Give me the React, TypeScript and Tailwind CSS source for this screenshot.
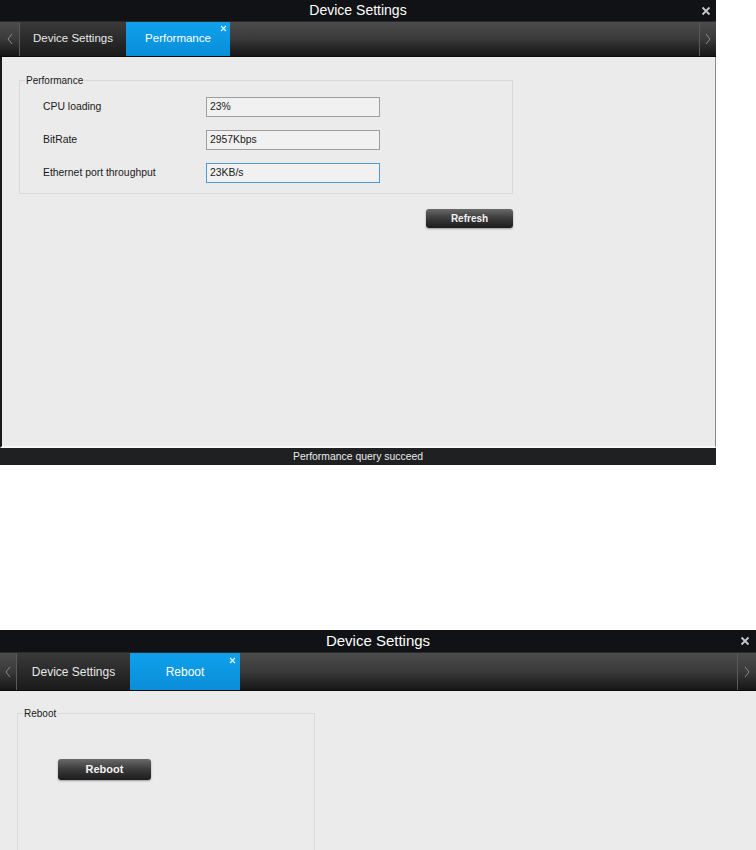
import type { ReactNode } from 'react'

const font = { fontFamily: '"Liberation Sans", Arial, sans-serif' }

function CloseIcon({ className }: { className?: string }) {
  return (
    <svg viewBox="0 0 10 10" className={className} fill="none" stroke="currentColor" strokeWidth="1.8">
      <path d="M1.5 1.5 8.5 8.5M8.5 1.5 1.5 8.5" />
    </svg>
  )
}

function Chevron({ dir }: { dir: 'left' | 'right' }) {
  return (
    <svg viewBox="0 0 6 12" className="w-[6px] h-[12px] text-[#8a8a8a]" fill="none" stroke="currentColor" strokeWidth="1">
      {dir === 'left' ? <path d="M5 1 1 6l4 5" /> : <path d="M1 1l4 5-4 5" />}
    </svg>
  )
}

function DarkButton({ children, className }: { children: ReactNode; className: string }) {
  return (
    <button
      className={`rounded-[3px] bg-gradient-to-b from-[#6a6a6a] via-[#3a3a3a] to-[#1c1c1c] font-bold text-[#f2f2f2] shadow-[0_1px_2px_rgba(0,0,0,0.35)] ${className}`}
    >
      {children}
    </button>
  )
}

function Field({ label, value, focused }: { label: string; value: string; focused?: boolean }) {
  return (
    <div className="flex items-center h-[20px]">
      <span className="w-[163px] text-[10.4px] text-[#1a1a1a]">{label}</span>
      <div
        className={`w-[174px] h-[20px] flex items-center px-[3px] text-[10.4px] text-[#1a1a1a] bg-[#f1f1f1] border ${
          focused ? 'border-[#4d9ad6]' : 'border-[#9e9e9e]'
        }`}
      >
        {value}
      </div>
    </div>
  )
}

function TitleBar({ h, size, closeRight }: { h: string; size: string; closeRight: string }) {
  return (
    <div className={`${h} bg-[#111215] relative flex items-center justify-center`}>
      <span className={`${size} text-white`}>Device Settings</span>
      <CloseIcon className={`absolute ${closeRight} top-1/2 -translate-y-1/2 w-[10px] h-[10px] text-[#c8c8c8]`} />
    </div>
  )
}

function PerformanceWindow() {
  return (
    <div className="w-[716px]">
      <TitleBar h="h-[21px]" size="text-[14px]" closeRight="right-[5px]" />

      {/* Tabs */}
      <div className="h-[36px] flex border-t border-[#2b2b2b] border-b border-b-[#0a0a0a] bg-gradient-to-b from-[#4c4c4c] via-[#3a3a3a] to-[#161616]">
        <div className="w-[20px] flex items-center justify-center border-r border-[#5a5a5a]">
          <Chevron dir="left" />
        </div>
        <div className="w-[106px] flex items-center justify-center text-[11.5px] text-[#e8e8e8] bg-gradient-to-b from-[#3a3a3a] to-[#1b1b1b]">
          Device Settings
        </div>
        <div className="w-[104px] relative flex items-center justify-center text-[11.5px] text-white bg-gradient-to-b from-[#0fa0ec] to-[#0a8ed9]">
          Performance
          <CloseIcon className="absolute right-[3px] top-[3px] w-[7px] h-[7px] text-[#dff2ff]" />
        </div>
        <div className="flex-1" />
        <div className="w-[17px] flex items-center justify-center border-l border-[#5a5a5a]">
          <Chevron dir="right" />
        </div>
      </div>

      {/* Content */}
      <div className="h-[391px] bg-[#ebebeb] border-l-2 border-l-[#1a1a1a] border-r border-r-[#8c8c8c] border-b-2 border-b-[#f8f8f8] pl-[17px] pt-[16px]">
        <fieldset className="w-[494px] border border-[#d9d9d9] pb-[10px]">
          <legend className="ml-[5px] px-[1px] text-[10px] text-[#1a1a1a]">Performance</legend>
          <div className="flex flex-col gap-[13px] pt-[9px] pl-[23px]">
            <Field label="CPU loading" value="23%" />
            <Field label="BitRate" value="2957Kbps" />
            <Field label="Ethernet port throughput" value="23KB/s" focused />
          </div>
        </fieldset>
        <div className="w-[494px] flex justify-end mt-[15px]">
          <DarkButton className="w-[87px] h-[19px] text-[10px]">Refresh</DarkButton>
        </div>
      </div>

      {/* Status */}
      <div className="h-[17px] bg-[#1f2022] flex items-center justify-center text-[10.4px] text-[#ececec]">
        Performance query succeed
      </div>
    </div>
  )
}

function RebootWindow() {
  return (
    <div className="w-[756px]">
      <TitleBar h="h-[22px]" size="text-[15px]" closeRight="right-[6px]" />

      <div className="h-[39px] flex border-t border-[#2b2b2b] border-b border-b-[#0a0a0a] bg-gradient-to-b from-[#4c4c4c] via-[#3a3a3a] to-[#161616]">
        <div className="w-[17px] flex items-center justify-center border-r border-[#5a5a5a]">
          <Chevron dir="left" />
        </div>
        <div className="w-[113px] flex items-center justify-center text-[12px] text-[#e8e8e8] bg-gradient-to-b from-[#3a3a3a] to-[#1b1b1b]">
          Device Settings
        </div>
        <div className="w-[110px] relative flex items-center justify-center text-[12px] text-white bg-gradient-to-b from-[#0fa0ec] to-[#0a8ed9]">
          Reboot
          <CloseIcon className="absolute right-[4px] top-[4px] w-[7px] h-[7px] text-[#dff2ff]" />
        </div>
        <div className="flex-1" />
        <div className="w-[19px] flex items-center justify-center border-l border-[#5a5a5a]">
          <Chevron dir="right" />
        </div>
      </div>

      <div className="h-[159px] bg-[#ebebeb] pl-[17px] pt-[15px] overflow-hidden">
        <fieldset className="w-[298px] h-[200px] border border-[#dadada]">
          <legend className="ml-[5px] px-[1px] text-[10px] text-[#1a1a1a]">Reboot</legend>
          <DarkButton className="ml-[40px] mt-[38px] w-[93px] h-[21px] text-[11px]">Reboot</DarkButton>
        </fieldset>
      </div>
    </div>
  )
}

export default function App() {
  return (
    <div className="w-[756px] h-[850px] bg-white overflow-hidden" style={font}>
      <PerformanceWindow />
      <div className="h-[165px]" />
      <RebootWindow />
    </div>
  )
}
